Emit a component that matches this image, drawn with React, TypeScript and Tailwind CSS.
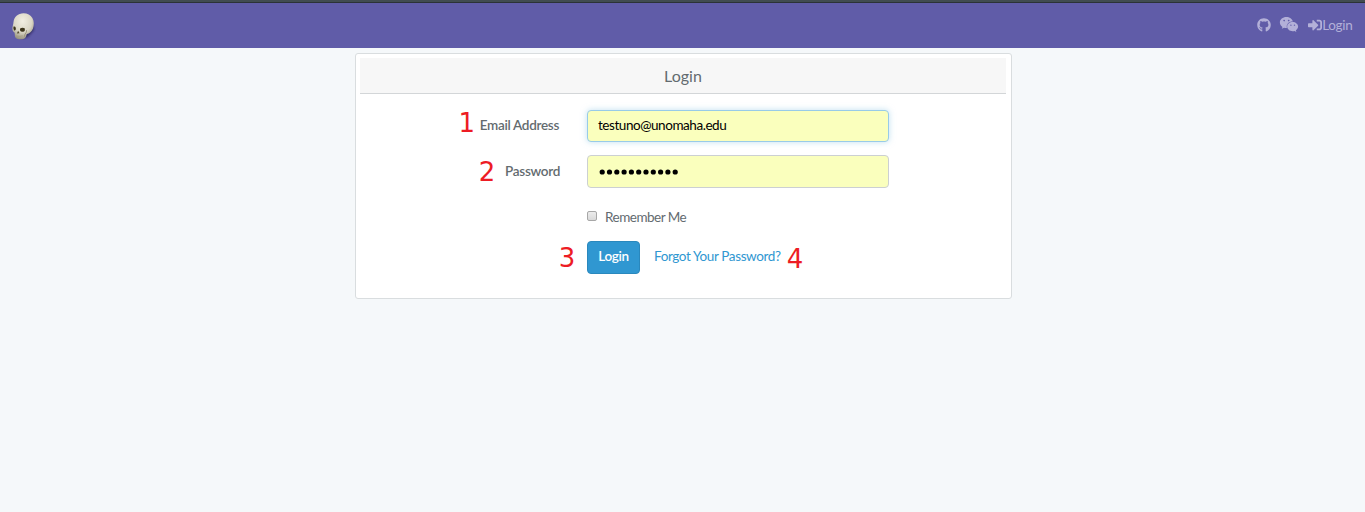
import type { ReactNode } from "react";
import { FaGithub, FaSignInAlt, FaWeixin } from "react-icons/fa";

function Skull() {
  return (
    <svg className="h-7 w-[26px]" viewBox="0 0 26 28">
      <defs>
        <radialGradient id="bone" cx="48%" cy="30%" r="70%">
          <stop offset="0" stopColor="#f1eee2" />
          <stop offset="0.6" stopColor="#dbd7c6" />
          <stop offset="1" stopColor="#989380" />
        </radialGradient>
        <filter id="soft" x="-30%" y="-30%" width="160%" height="160%">
          <feGaussianBlur stdDeviation="1.1" />
        </filter>
      </defs>
      <path d="M11 27L18 25L24 18L23 12L15 18Z" fill="#262050" opacity="0.7" filter="url(#soft)" />
      <path
        d="M13.5 1.2C8 1.2 4 4.8 3.5 10C3.4 12.5 2.3 14.5 2.4 17C2.4 19 3.4 19.8 4.5 20.5C5 22.5 4.6 24.6 5.6 25.8C7.5 27.5 11.5 27.8 14 26.8C16 26 16 24 16.8 22C19.5 21.4 21.6 19.6 22.9 16.7C24.2 13.3 24.2 9.2 22.4 6C20.6 2.8 17.5 1.2 13.5 1.2Z"
        fill="url(#bone)"
      />
      <path d="M3.4 14.8Q5.2 14 5.8 16Q6.2 18.4 4.5 18.7Q3.1 18.2 3.4 14.8Z" fill="#3d351c" />
      <path d="M10.1 16.4Q12.6 15 14.9 16.4Q15.3 19.2 13.4 19.8Q10.6 20.2 10 18.3Z" fill="#3d351c" />
      <path d="M8.1 18.8L9.5 21.3L6.9 21.5Z" fill="#50472a" />
      <path d="M6.2 24Q9 24.9 12.8 23.8" stroke="#a39b80" strokeWidth="0.7" fill="none" />
      <path d="M16.6 18.2Q16.8 20.2 15 22.2L14.4 24.7" stroke="#9b9379" strokeWidth="1" fill="none" />
    </svg>
  );
}

function Step({ children }: { children: ReactNode }) {
  return (
    <span className="font-['DejaVu_Sans',sans-serif] text-[26px] leading-8 tracking-[-0.3px] text-[#ed1c24]">{children}</span>
  );
}

export default function App() {
  return (
    <div className="min-h-screen bg-[#f5f8fa] font-['Lato',sans-serif] text-[13.5px] tracking-[-0.45px] text-[#636b6f]">
      <div className="h-[3px] border-b border-[#2b3337] bg-[#414c51]" />
      <nav className="flex h-[45px] items-center justify-between bg-[#605ca8] pr-[12.5px] pl-[10px]">
        <Skull />
        <div className="flex items-center text-[#b3b0d8]">
          <FaGithub className="mb-px mr-2 size-[14px]" />
          <FaWeixin className="mb-0.5 mr-[9px] h-[17px] w-5" />
          <FaSignInAlt className="mb-px size-[14px]" />
          <span className="-mt-0.5 leading-5 tracking-[-0.3px]">Login</span>
        </div>
      </nav>
      <main className="mt-[5px] ml-[355px] h-[246px] w-[657px] rounded-[3px] border border-[#d9dddf] bg-white p-1">
        <h1 className="mr-px flex h-9 items-center justify-center border-b border-[#d3d6d8] bg-[#f7f7f7] pt-px text-[16px] font-normal tracking-normal">
          Login
        </h1>
        <form className="pt-4">
          <div className="flex h-8 items-center">
            <div className="flex h-8 w-[199px] items-center justify-end gap-[5px]">
              <div className="pb-[6px]"><Step>1</Step></div>
              <label className="pb-0.5 font-semibold tracking-[-0.3px]">Email Address</label>
            </div>
            <div className="ml-7 flex h-8 w-[302px] items-center rounded-[4px] border border-[#98cbe8] bg-[#faffbd] px-[10px] pb-0.5 text-black shadow-[0_0_6px_rgba(152,203,232,0.6)]">
              testuno@unomaha.edu
            </div>
          </div>
          <div className="mt-[13px] flex h-[33px] items-center">
            <div className="flex w-[200px] items-center justify-end gap-[10px]">
              <Step>2</Step>
              <label className="font-semibold tracking-[-0.3px]">Password</label>
            </div>
            <div className="ml-[27px] flex h-[33px] w-[302px] items-center rounded-[4px] border border-[#ccd0d2] bg-[#faffbd] px-[10px] text-black">
              <svg className="h-2 w-20" viewBox="0 0 80 8">
                {Array.from({ length: 11 }, (_, i) => (
                  <circle key={i} cx={4.2 + i * 7.3} cy="4" r="2.6" />
                ))}
              </svg>
            </div>
          </div>
          <div className="mt-[19px] ml-[227px] flex h-5 items-center gap-2">
            <span className="mb-[3px] size-[10px] rounded-[2px] border border-[#a7a7a7] bg-linear-to-b from-[#ececec] to-[#d9d9d9]" />
            <span className="pt-px tracking-[-0.5px]">Remember Me</span>
          </div>
          <div className="mt-[14px] flex h-[33px] items-center">
            <div className="mr-3 flex w-[215px] justify-end"><Step>3</Step></div>
            <button type="button" className="flex h-[33px] w-[53px] items-center justify-center rounded-[4px] border border-[#2a88bd] bg-[#3097d1] pb-[3px] font-semibold tracking-[-0.3px] text-white">
              Login
            </button>
            <a className="mr-[6px] ml-[14px] pb-[3px] tracking-[-0.38px] text-[#3097d1]">Forgot Your Password?</a>
            <div className="pt-0.5"><Step>4</Step></div>
          </div>
        </form>
      </main>
    </div>
  );
}
